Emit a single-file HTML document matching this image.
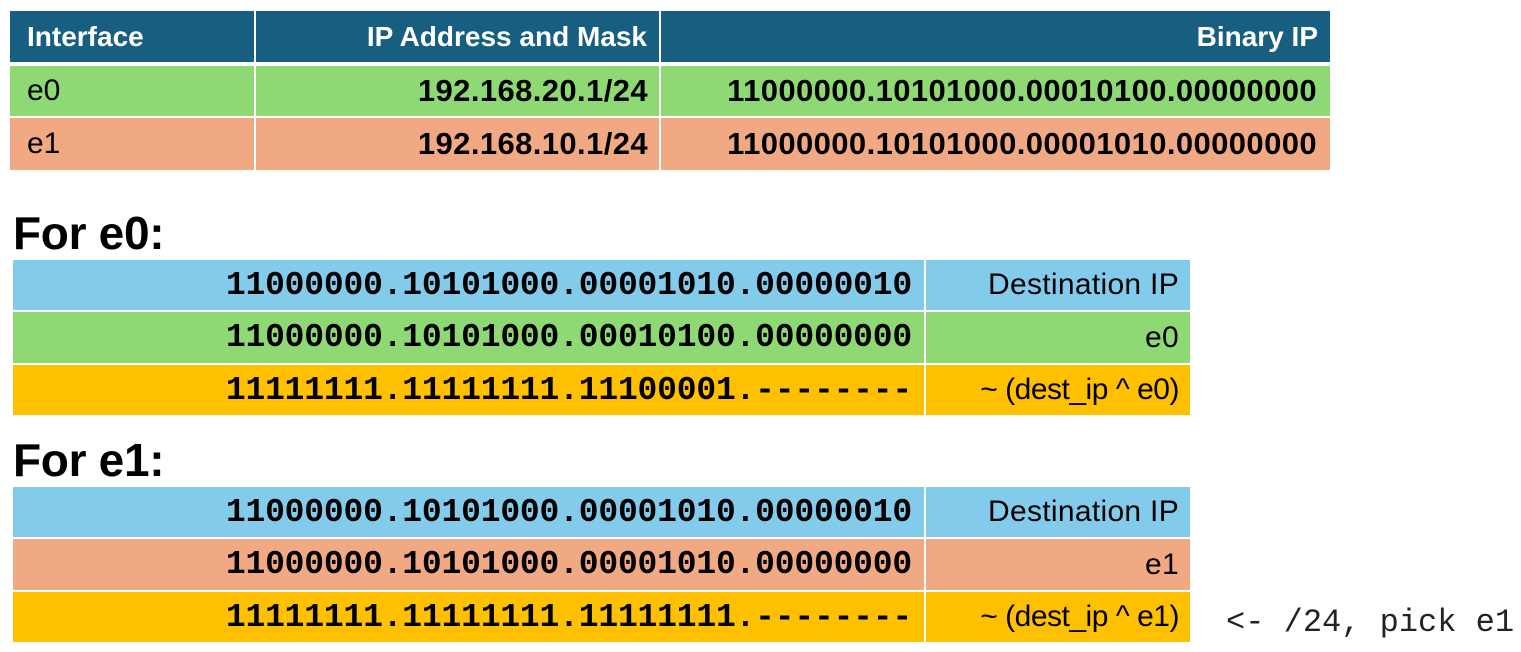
<!DOCTYPE html>
<html><head><meta charset="utf-8"><style>
body{margin:0;width:1521px;height:652px;background:#fff;position:relative;overflow:hidden;font-family:"Liberation Sans",sans-serif;}
.c{position:absolute;box-sizing:border-box;display:flex;align-items:center;white-space:nowrap;}
.r{justify-content:flex-end;}
.h{background:#175E80;color:#fff;font-weight:bold;font-size:28px;letter-spacing:0px;}
.g{background:#8FD974;}
.s{background:#F1A983;}
.b{background:#83CBEB;}
.y{background:#FFC000;}
.bs{font-weight:bold;font-size:31px;letter-spacing:0.4px;}
.m{font-family:"Liberation Mono",monospace;font-weight:bold;font-size:33px;letter-spacing:-0.2px;}
.t{font-size:30px;letter-spacing:0.3px;}
.hd{position:absolute;left:13px;font-weight:bold;font-size:46px;letter-spacing:-0.3px;}
</style></head><body>
<div class="c h" style="left:10px;top:11px;width:244px;height:51px;padding-left:17px">Interface</div>
<div class="c h r" style="left:256px;top:11px;width:403px;height:51px;padding-right:12px">IP Address and Mask</div>
<div class="c h r" style="left:661px;top:11px;width:669px;height:51px;padding-right:12px">Binary IP</div>

<div class="c g" style="left:10px;top:66px;width:244px;height:50px;padding-left:17px;font-size:30px">e0</div>
<div class="c g r bs" style="left:256px;top:66px;width:403px;height:50px;padding-right:11px">192.168.20.1/24</div>
<div class="c g r bs" style="left:661px;top:66px;width:669px;height:50px;padding-right:13px">11000000.10101000.00010100.00000000</div>

<div class="c s" style="left:10px;top:118px;width:244px;height:52px;padding-left:17px;font-size:30px">e1</div>
<div class="c s r bs" style="left:256px;top:118px;width:403px;height:52px;padding-right:11px">192.168.10.1/24</div>
<div class="c s r bs" style="left:661px;top:118px;width:669px;height:52px;padding-right:13px">11000000.10101000.00001010.00000000</div>

<div class="hd" style="top:206px">For e0:</div>
<div class="c b r m" style="left:13px;top:260px;width:911px;height:50px;padding-right:12px">11000000.10101000.00001010.00000010</div>
<div class="c b r t" style="left:926px;top:260px;width:264px;height:50px;padding-right:11px">Destination IP</div>
<div class="c g r m" style="left:13px;top:312px;width:911px;height:51px;padding-right:12px">11000000.10101000.00010100.00000000</div>
<div class="c g r t" style="left:926px;top:312px;width:264px;height:51px;padding-right:11px">e0</div>
<div class="c y r m" style="left:13px;top:365px;width:911px;height:50px;padding-right:12px">11111111.11111111.11100001.--------</div>
<div class="c y r t" style="left:926px;top:365px;width:264px;height:50px;padding-right:11px;letter-spacing:-0.5px">~ (dest_ip ^ e0)</div>

<div class="hd" style="top:433px">For e1:</div>
<div class="c b r m" style="left:13px;top:487px;width:911px;height:50px;padding-right:12px">11000000.10101000.00001010.00000010</div>
<div class="c b r t" style="left:926px;top:487px;width:264px;height:50px;padding-right:11px">Destination IP</div>
<div class="c s r m" style="left:13px;top:539px;width:911px;height:51px;padding-right:12px">11000000.10101000.00001010.00000000</div>
<div class="c s r t" style="left:926px;top:539px;width:264px;height:51px;padding-right:11px">e1</div>
<div class="c y r m" style="left:13px;top:592px;width:911px;height:50px;padding-right:12px">11111111.11111111.11111111.--------</div>
<div class="c y r t" style="left:926px;top:592px;width:264px;height:50px;padding-right:11px;letter-spacing:-0.5px">~ (dest_ip ^ e1)</div>

<div class="c" style="left:1226px;top:600px;height:44px;font-family:'Liberation Mono',monospace;font-size:32px;letter-spacing:0px;color:#222">&lt;- /24, pick e1</div>
</body></html>
